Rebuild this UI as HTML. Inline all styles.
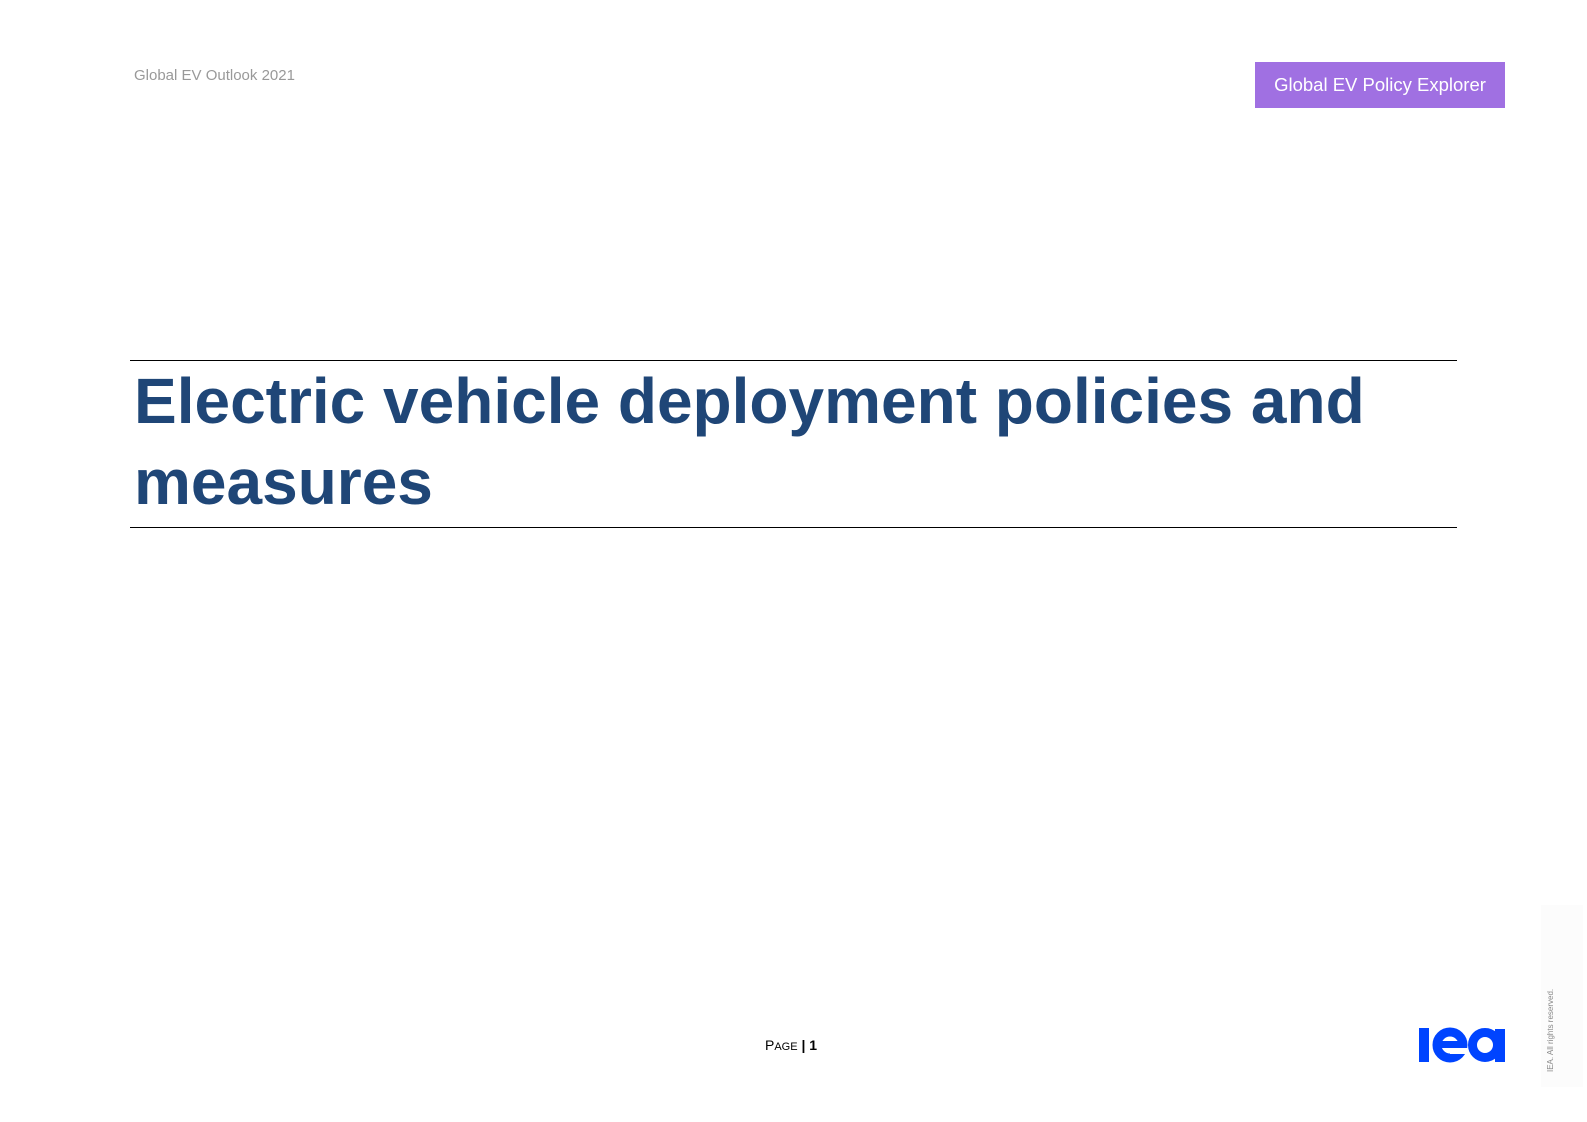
<!DOCTYPE html>
<html><head><meta charset="utf-8"><style>
html,body{margin:0;padding:0;background:#fff;}
body{width:1587px;height:1122px;position:relative;overflow:hidden;font-family:"Liberation Sans",Arial,sans-serif;}
.hdr{position:absolute;left:134px;top:67px;font-size:15px;color:#999;}
.btn{position:absolute;left:1255px;top:62px;width:250px;height:46px;background:#a070e2;color:#fff;font-size:18.5px;line-height:46px;text-align:center;}
.rule{position:absolute;left:130px;width:1327px;height:1px;background:#000;}
.title{position:absolute;left:134px;top:361px;width:1320px;font-size:64px;font-weight:bold;color:#1f4677;line-height:81px;}
.page{position:absolute;left:765px;top:1037px;font-size:14px;color:#000;}
.panel{position:absolute;left:1541px;top:905px;width:42px;height:182px;background:#fcfcfc;}
.vt{position:absolute;left:1546px;top:1072px;transform-origin:0 0;transform:rotate(-90deg);font-size:8px;color:#888;white-space:nowrap;}
</style></head><body>
<div class="hdr">Global EV Outlook 2021</div>
<div class="btn">Global EV Policy Explorer</div>
<div class="rule" style="top:360px"></div>
<div class="title">Electric vehicle deployment policies and measures</div>
<div class="rule" style="top:527px"></div>
<div class="page">P<span style="font-size:11px">AGE</span> <b>| 1</b></div>
<svg style="position:absolute;left:1419px;top:1027px" width="86" height="37" viewBox="0 0 86 37">
<rect x="0" y="1" width="10" height="34" fill="#0044ff"/>
<circle cx="31" cy="18" r="13" fill="none" stroke="#0044ff" stroke-width="9"/>
<rect x="31" y="21" width="18" height="6" fill="#fff"/>
<rect x="16" y="14" width="32" height="7" fill="#0044ff"/>
<circle cx="66" cy="18" r="12.5" fill="none" stroke="#0044ff" stroke-width="9"/>
<rect x="76" y="2" width="10" height="33" fill="#0044ff"/>
</svg>
<div class="panel"></div>
<div class="vt">IEA. All rights reserved.</div>
</body></html>
